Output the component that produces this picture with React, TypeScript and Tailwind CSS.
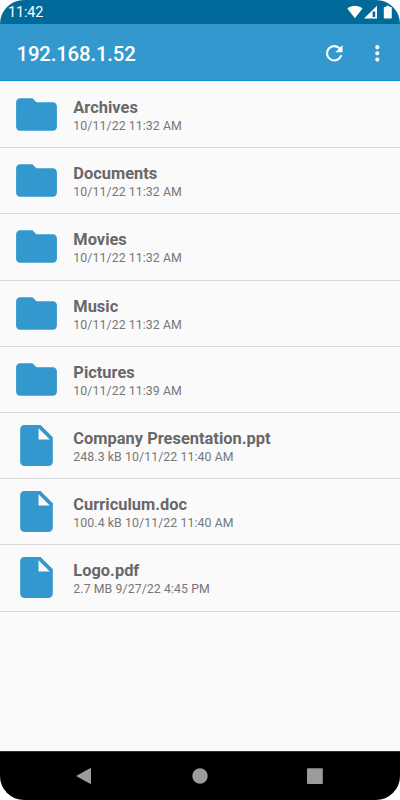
import type { ReactNode } from 'react';

interface Entry {
  name: string;
  info: string;
  type: 'folder' | 'file';
}

const entries: Entry[] = [
  { name: 'Archives', info: '10/11/22 11:32 AM', type: 'folder' },
  { name: 'Documents', info: '10/11/22 11:32 AM', type: 'folder' },
  { name: 'Movies', info: '10/11/22 11:32 AM', type: 'folder' },
  { name: 'Music', info: '10/11/22 11:32 AM', type: 'folder' },
  { name: 'Pictures', info: '10/11/22 11:39 AM', type: 'folder' },
  { name: 'Company Presentation.ppt', info: '248.3 kB 10/11/22 11:40 AM', type: 'file' },
  { name: 'Curriculum.doc', info: '100.4 kB 10/11/22 11:40 AM', type: 'file' },
  { name: 'Logo.pdf', info: '2.7 MB 9/27/22 4:45 PM', type: 'file' },
];

const paths = {
  folder: 'M10 4H4c-1.1 0-1.99.9-1.99 2L2 18c0 1.1.9 2 2 2h16c1.1 0 2-.9 2-2V8c0-1.1-.9-2-2-2h-8l-2-2z',
  file: 'M6 2c-1.1 0-1.99.9-1.99 2L4 20c0 1.1.89 2 1.99 2H18c1.1 0 2-.9 2-2V8l-6-6H6zm7 7V3.5L18.5 9H13z',
};

function StatusBar() {
  return (
    <div className="flex h-6 shrink-0 items-center justify-between bg-[#006a9a] pl-2 pr-[7px] text-white">
      <span className="pt-[3px] text-[14.4px] leading-none tracking-[-0.1px]">11:42</span>
      <svg width="46" height="24" viewBox="0 0 46 24" fill="currentColor">
        <path d="M0.3 8.6C4.6 4.9 11.2 4.9 15.5 8.6L7.9 18.2z" />
        <path fillRule="evenodd" d="M30 5.7V18.5H17zM25.6 11.4V17.1H28.2V11.4z" />
        <path d="M39.1 5.7h3.4v1.2h1.5c.5 0 .8.3.8.8v10.1c0 .5-.3.8-.8.8h-6.4c-.5 0-.8-.3-.8-.8V7.7c0-.5.3-.8.8-.8h1.5z" />
      </svg>
    </div>
  );
}

function IconButton({ label, children }: { label: string; children: ReactNode }) {
  return (
    <button aria-label={label} className="text-white">
      <svg width="24.6" height="24.6" viewBox="0 0 24 24" fill="currentColor">{children}</svg>
    </button>
  );
}

function AppBar() {
  return (
    <header className="flex h-[57px] shrink-0 items-center border-b border-[#0e91cc] bg-[#3398cd] pl-[16.5px] pr-[10.5px] pt-[2.5px]">
      <h1 className="flex-1 pt-0.5 text-[20.4px] font-medium leading-6 tracking-[-0.18px] text-white">192.168.1.52</h1>
      <div className="flex items-center gap-[18px]">
        <IconButton label="Refresh">
          <path d="M17.65 6.35C16.2 4.9 14.21 4 12 4c-4.42 0-7.99 3.58-7.99 8s3.57 8 7.99 8c3.73 0 6.84-2.55 7.73-6h-2.08c-.82 2.33-3.04 4-5.65 4-3.31 0-6-2.69-6-6s2.69-6 6-6c1.66 0 3.14.69 4.22 1.78L13 11h7V4l-2.35 2.35z" />
        </IconButton>
        <IconButton label="More">
          <path d="M12 8c1.1 0 2-.9 2-2s-.9-2-2-2-2 .9-2 2 .9 2 2 2zm0 2c-1.1 0-2 .9-2 2s.9 2 2 2 2-.9 2-2-.9-2-2-2zm0 6c-1.1 0-2 .9-2 2s.9 2 2 2 2-.9 2-2-.9-2-2-2z" />
        </IconButton>
      </div>
    </header>
  );
}

function EntryRow({ entry }: { entry: Entry }) {
  return (
    <li className="flex h-[66.2px] items-center border-b border-[#d8d8d8] pl-[12.3px]">
      <svg width="49" height="49" viewBox="0 0 24 24" fill="#3398cd" className="shrink-0">
        <path d={paths[entry.type]} />
      </svg>
      <div className="pl-3 pt-1">
        <p className="text-[16.4px] font-bold leading-[19px] tracking-[0.02px] text-[#686868]">{entry.name}</p>
        <p className="text-[12.3px] leading-[18px] tracking-[0.09px] text-[#777777]">{entry.info}</p>
      </div>
    </li>
  );
}

function NavBar() {
  return (
    <nav className="flex h-[49px] shrink-0 items-center justify-center border-t border-[#303030] bg-black">
      <svg width="260" height="20" viewBox="0 0 260 20" fill="#9b9b9b">
        <path d="M21 1.8V18.2L6 10z" />
        <circle cx="130" cy="10" r="7.7" />
        <rect x="237" y="2.2" width="15.8" height="15.8" rx="1" />
      </svg>
    </nav>
  );
}

export default function App() {
  return (
    <div className="h-[800px] w-[400px] bg-white font-['Roboto',sans-serif]">
      <div className="flex h-full flex-col overflow-hidden rounded-[24px] bg-[#fafafa]">
        <StatusBar />
        <AppBar />
        <ul className="flex-1 border-t border-[#e4eef3]">
          {entries.map((entry) => (
            <EntryRow key={entry.name} entry={entry} />
          ))}
        </ul>
        <NavBar />
      </div>
    </div>
  );
}
